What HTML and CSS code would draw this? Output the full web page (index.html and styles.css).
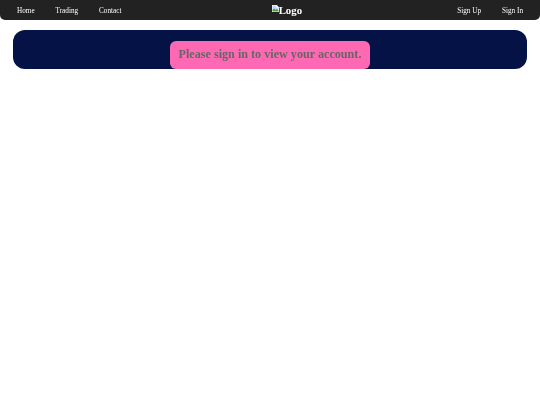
FILE: index.html
```html
<!DOCTYPE html>
<html lang="en">
<head>
  <meta charset="UTF-8" />
  <title>Account</title>
  <link rel="stylesheet" href="styles.css">
</head>
<body>
  <nav class="navbar">
    <div class="nav-links">
      <a href="#">Home</a>
      <a href="#">Trading</a>
      <a href="#">Contact</a>
    </div>
    <div class="logo">
      <svg class="broken-img" viewBox="0 0 16 16" width="7" height="7" aria-hidden="true">
        <path d="M0 0h11l5 5v11H0z" fill="#fff" />
        <path d="M1 1h9v5h5v4H1z" fill="#c3d7f0" />
        <path d="M1 15v-4l4-3 3 3 3-2 4 3v3z" fill="#4f9a45" />
      </svg><span>Logo</span>
    </div>
    <div class="nav-links">
      <a href="#">Sign Up</a>
      <a href="#">Sign In</a>
    </div>
  </nav>

  <div class="banner">
    <h1 class="notice">Please sign in to view your account.</h1>
  </div>
</body>
</html>
```

FILE: styles.css
```css
* {
  box-sizing: border-box;
  font-family: 'Liberation Serif', 'Times New Roman', serif;
}

body {
  margin: 0;
  background: #fff;
}

.navbar {
  display: flex;
  justify-content: space-between;
  align-items: center;
  height: 20px;
  padding: 1px 17px 0;
  background: #222;
  border-radius: 0 0 5px 5px;
  will-change: transform;
}

.nav-links {
  display: flex;
  gap: 21px;
}

.nav-links a {
  color: #fff;
  font-size: 7.2px;
  text-decoration: none;
}

.logo {
  display: flex;
  align-items: flex-start;
  margin: -1px 0 0 -5px;
  color: #fff;
  font-size: 10.8px;
  font-weight: bold;
}

.broken-img {
  flex: none;
  margin-top: 1px;
}

.banner {
  display: flex;
  justify-content: center;
  height: 39px;
  margin: 10px 13px 0;
  padding-top: 10.5px;
  background: #041246;
  border-radius: 12px;
  will-change: transform;
}

.notice {
  margin: 0;
  padding: 0 8.5px;
  height: 28.5px;
  line-height: 27px;
  font-size: 12.15px;
  color: #666;
  background: #ff69b4;
  border-radius: 6px;
}
```
